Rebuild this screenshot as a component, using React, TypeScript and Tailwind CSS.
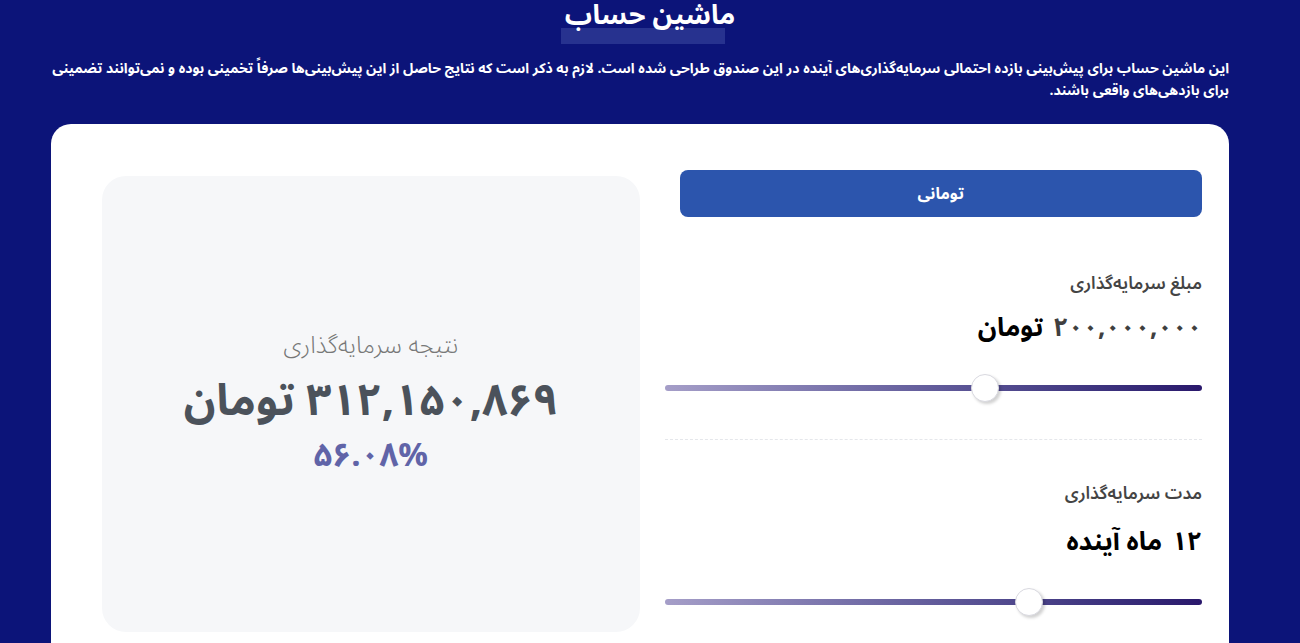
import React from "react";

const font = { fontFamily: '"Noto Sans Arabic", "Vazirmatn", "DejaVu Sans", sans-serif' };

function Slider({ pct }: { pct: number }) {
  return (
    <div className="relative h-[28px] flex items-center" dir="ltr">
      <div className="w-full h-[6px] rounded-full bg-linear-to-r from-[#a59ec8] to-[#2a186c]" />
      <div
        className="absolute top-0 w-[28px] h-[28px] rounded-full bg-white border border-[#d9d9e0] shadow-[2px_2px_3px_rgba(0,0,0,0.18)]"
        style={{ left: `calc(${pct}% - 14px)` }}
      />
    </div>
  );
}

export default function App() {
  return (
    <div dir="rtl" className="min-h-screen bg-[#0c1479] text-white overflow-hidden" style={font}>
      <div className="flex justify-center">
        <h1 className="relative mt-[-6px] text-[27px] font-bold leading-[44px]">
          <span className="absolute left-[-4px] right-[10px] bottom-[-6px] h-[16px] bg-[#27328f]" />
          <span className="relative">ماشین حساب</span>
        </h1>
      </div>
      <div className="ml-[51px] mr-[71px]">
        <p className="mt-[20px] text-[14px] font-bold leading-[22px] text-right">
          این ماشین حساب برای پیش‌بینی بازده احتمالی سرمایه‌گذاری‌های آینده در این صندوق طراحی شده است. لازم به ذکر است که نتایج حاصل از این پیش‌بینی‌ها صرفاً تخمینی بوده و نمی‌توانند تضمینی برای بازدهی‌های واقعی باشند.
        </p>
        <div className="mt-[22px] bg-white rounded-[20px] pr-[27px] pl-[51px] pt-[46px] pb-[40px] grid grid-cols-2 gap-[25px] text-black">
          <div className="flex flex-col">
            <button className="h-[47px] rounded-[8px] bg-[#2c55ad] text-white text-[16px] font-bold" style={{ marginLeft: 15 }}>
              تومانی
            </button>
            <div className="mt-[54px] text-[17.5px] font-semibold text-[#444] leading-[26px]">مبلغ سرمایه‌گذاری</div>
            <div className="mt-[11px] text-[26px] font-bold leading-[40px] flex gap-[10px]">
              <span className="text-[#3f3f3f]">۲۰۰,۰۰۰,۰۰۰</span>
              <span>تومان</span>
            </div>
            <div className="mt-[26px]">
              <Slider pct={59.6} />
            </div>
            <div className="mt-[37px] border-t border-dashed border-[#e5e7eb]" />
            <div className="mt-[41px] text-[17.5px] font-semibold text-[#444] leading-[26px]">مدت سرمایه‌گذاری</div>
            <div className="mt-[15px] text-[26px] font-bold leading-[40px] flex gap-[10px]">
              <span>۱۲</span>
              <span>ماه آینده</span>
            </div>
            <div className="mt-[26px]">
              <Slider pct={67.8} />
            </div>
          </div>
          <div className="mt-[6px] h-[456px] rounded-[24px] bg-[#f6f7f9] flex flex-col items-center justify-center">
            <div className="text-[24px] text-[#777] font-light leading-[30px]">نتیجه سرمایه‌گذاری</div>
            <div className="mt-[10px] text-[44px] font-bold text-[#4b525b] leading-[60px]">۳۱۲,۱۵۰,۸۶۹ تومان</div>
            <div className="mt-[4px] text-[33px] font-bold text-[#6064a8] leading-[42px]">۵۶.۰۸%</div>
          </div>
        </div>
      </div>
    </div>
  );
}
